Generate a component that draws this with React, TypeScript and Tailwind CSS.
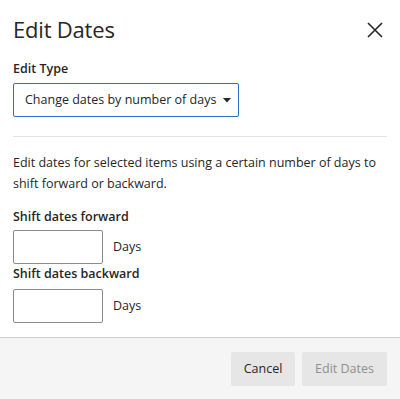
import React from 'react';

export default function App() {
  return (
    <div className="w-[400px] h-[399px] bg-white flex flex-col text-[#262626] font-['Open_Sans',sans-serif]">
      <div className="flex-1 px-[13px]">
        <div className="flex items-center justify-between pt-[12px] h-[46px]">
          <h1 className="text-[22px] font-normal leading-none tracking-[-0.2px]">Edit Dates</h1>
          <button aria-label="Close" className="mr-[4px] mt-[2px] text-[#262626]">
            <svg width="16" height="16" viewBox="0 0 16 16" fill="none" stroke="currentColor" strokeWidth="1.6">
              <path d="M1 1 L15 15 M15 1 L1 15" />
            </svg>
          </button>
        </div>

        <div className="mt-[14px] text-[12.5px] font-semibold leading-[18px]">Edit Type</div>
        <div className="mt-[5px] w-[226px] h-[34px] border-[1.5px] border-[#2a6fcb] rounded-[2px] flex items-center pl-[11px] text-[12.5px]">
          <span>Change dates by number of days</span>
          <svg className="ml-[7px]" width="8" height="5" viewBox="0 0 8 5">
            <path d="M0 0 L8 0 L4 4.5 Z" fill="#262626" />
          </svg>
        </div>

        <div className="mt-[19px] border-t border-[#e2e2e2]" />

        <p className="mt-[15px] text-[12.5px] leading-[21px]">
          Edit dates for selected items using a certain number of days to shift forward or backward.
        </p>

        <div className="mt-[14px] text-[12.5px] font-semibold leading-[18px]">Shift dates forward</div>
        <div className="mt-[4px] flex items-center gap-[10px]">
          <input className="w-[90px] h-[34px] border border-[#8c8c8c] rounded-[2px] outline-none" />
          <span className="text-[12.5px]">Days</span>
        </div>

        <div className="mt-[1px] text-[12.5px] font-semibold leading-[18px]">Shift dates backward</div>
        <div className="mt-[6px] flex items-center gap-[10px]">
          <input className="w-[90px] h-[34px] border border-[#8c8c8c] rounded-[2px] outline-none" />
          <span className="text-[12.5px]">Days</span>
        </div>
      </div>

      <div className="h-[62px] border-t-[1.5px] border-[#cfcfcf] bg-[#f5f5f5] flex items-start justify-end gap-[7px] pt-[14px] pr-[13px]">
        <button className="w-[64px] h-[34px] bg-[#e6e6e6] rounded-[2px] text-[12.5px] text-[#262626]">Cancel</button>
        <button className="w-[85px] h-[34px] bg-[#e6e6e6] rounded-[2px] text-[12.5px] text-[#8f8f8f]">Edit Dates</button>
      </div>
    </div>
  );
}
